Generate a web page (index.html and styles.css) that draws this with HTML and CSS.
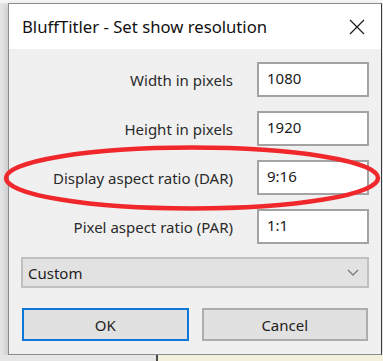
FILE: index.html
```html
<!DOCTYPE html>
<html lang="en">
<head>
    <meta charset="UTF-8">
    <title>BluffTitler - Set show resolution</title>
    <link rel="stylesheet" href="styles.css">
</head>
<body>

    <div class="escritorio">

        <div class="dialogo">

            <div class="barra_titulo">
                <span class="titulo">BluffTitler - Set show resolution</span>
                <svg class="cerrar" width="16" height="16" viewBox="0 0 16 16">
                    <path d="M1 1 L15 15 M15 1 L1 15" stroke="#1b1b1b" stroke-width="1.2" fill="none"/>
                </svg>
            </div>

            <div class="contenido">

                <div class="filas">
                    <label class="etiqueta" for="ancho">Width in pixels</label>
                    <div class="caja" id="ancho">1080</div>

                    <label class="etiqueta" for="alto">Height in pixels</label>
                    <div class="caja" id="alto">1920</div>

                    <label class="etiqueta" for="dar">Display aspect ratio (DAR)</label>
                    <div class="caja" id="dar">9:16</div>

                    <label class="etiqueta" for="par">Pixel aspect ratio (PAR)</label>
                    <div class="caja" id="par">1:1</div>
                </div>

                <div class="desplegable">
                    <span>Custom</span>
                    <svg width="12" height="7" viewBox="0 0 12 7">
                        <path d="M1 1 L6 6 L11 1" stroke="#7a7a7a" stroke-width="1.3" fill="none"/>
                    </svg>
                </div>

                <div class="botones">
                    <div class="boton activo">OK</div>
                    <div class="boton">Cancel</div>
                </div>

            </div>
        </div>

        <div class="fondo_abajo">
            <div class="gris"></div>
            <div class="beige"></div>
        </div>

    </div>

    <!-- marca roja encima del dialogo -->
    <svg class="marca" width="383" height="361" viewBox="0 0 383 361">
        <ellipse cx="192" cy="178" rx="186" ry="30.5" stroke="#f0282c" stroke-width="4.5" fill="none"/>
    </svg>

</body>
</html>
```

FILE: styles.css
```css
* {
    box-sizing: border-box;
}
body {
    margin: 0;
    width: 383px;
    height: 361px;
    overflow: hidden;
    background-color: #e4e4e4;
    font-family: "Noto Sans", "Open Sans", sans-serif;
    color: #1e1e1e;
}
.escritorio {
    display: flex;
    flex-direction: column;
    height: 361px;
    background: linear-gradient(to bottom, #f6f6f6 0px, #f6f6f6 3px, #e6e6e6 3px);
    padding-top: 3px;
}
.dialogo {
    margin-left: 8px;
    width: 374px;
    height: 352px;
    border: 1px solid #8c8c8c;
    border-right-color: #3a3a3a;
    background-color: #f0f0f0;
    box-shadow: -3px 2px 6px rgba(0, 0, 0, 0.12);
    display: flex;
    flex-direction: column;
}
.barra_titulo {
    height: 45px;
    background-color: #ffffff;
    display: flex;
    align-items: center;
    justify-content: space-between;
    padding: 0 16px 0 13px;
}
.titulo {
    font-size: 16.7px;
    color: #111;
}
.contenido {
    padding: 13px 12px 0 12px;
    display: flex;
    flex-direction: column;
}
.filas {
    display: grid;
    grid-template-columns: 1fr 112px;
    column-gap: 24px;
    row-gap: 14px;
}
.etiqueta {
    font-size: 15px;
    text-align: right;
    align-self: center;
    color: #2a2a2a;
}
.caja {
    height: 35px;
    background-color: #fff;
    border: 2px solid #a3a3a3;
    padding: 0 8px;
    font-size: 15px;
    line-height: 29px;
    color: #1a1a1a;
}
.desplegable {
    margin-top: 13px;
    height: 31px;
    background-color: #e2e2e2;
    border: 2px solid #c0c0c0;
    display: flex;
    align-items: center;
    justify-content: space-between;
    padding: 0 8px 0 5px;
    font-size: 15px;
}
.botones {
    margin-top: 20px;
    display: flex;
    gap: 13px;
    padding: 0 1px;
}
.boton {
    flex: 1;
    height: 33px;
    background-color: #e1e1e1;
    border: 2px solid #adadad;
    display: flex;
    align-items: center;
    justify-content: center;
    font-size: 15px;
}
.boton.activo {
    border-color: #0a78d4;
}
.fondo_abajo {
    flex: 1;
    display: flex;
}
.gris {
    width: 156px;
    background-color: #e6e6e6;
}
.beige {
    flex: 1;
    background-color: #f3f1dd;
    border-left: 2px solid #4a4a4a;
}
.marca {
    position: absolute;
    top: 0;
    left: 0;
    pointer-events: none;
}
```
